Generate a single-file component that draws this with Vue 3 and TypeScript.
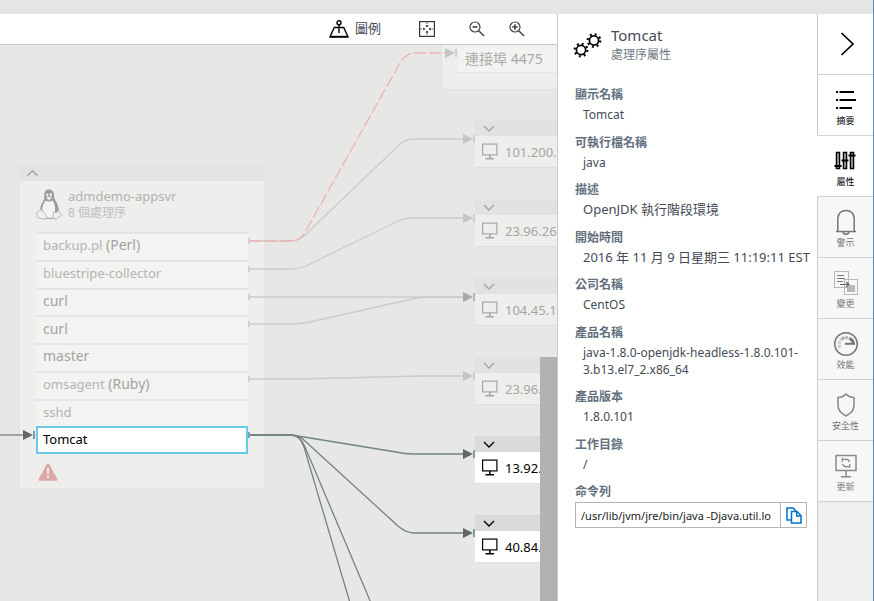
<script setup lang="ts">
import { ref } from 'vue'

interface ProcessRow {
  name: string
  runtime?: string
  tone?: 'strong'
  selected?: boolean
}

interface ServerNode {
  address: string
  x: number
  y: number
  active: boolean
}

interface Edge {
  d: string
  kind: 'faint' | 'active' | 'failed'
}

interface Marker {
  x: number
  y: number
  kind: 'faint' | 'medium' | 'active'
}

interface Field {
  label: string
  value: string
  localized?: boolean
}

const processes: ProcessRow[] = [
  { name: 'backup.pl', runtime: '(Perl)' },
  { name: 'bluestripe-collector' },
  { name: 'curl', tone: 'strong' },
  { name: 'curl', tone: 'strong' },
  { name: 'master', tone: 'strong' },
  { name: 'omsagent', runtime: '(Ruby)' },
  { name: 'sshd' },
  { name: 'Tomcat', selected: true },
]

const servers: ServerNode[] = [
  { address: '101.200.', x: 475, y: 75, active: false },
  { address: '23.96.26', x: 475, y: 154, active: false },
  { address: '104.45.1', x: 475, y: 233, active: false },
  { address: '23.96.', x: 475, y: 312, active: false },
  { address: '13.92.', x: 475, y: 391, active: true },
  { address: '40.84.', x: 475, y: 470, active: true },
]

const edges: Edge[] = [
  { d: 'M250 196H290Q298 196 305 190L398 101Q405 94 413 94H464', kind: 'faint' },
  { d: 'M250 224H290Q298 224 306 221L396 177Q404 173 413 173H464', kind: 'faint' },
  { d: 'M250 252H464', kind: 'faint' },
  { d: 'M250 279H292Q300 279 310 277L412 254Q420 252 430 252H464', kind: 'faint' },
  { d: 'M250 334L300 334L420 331H464', kind: 'faint' },
  { d: 'M250 196H291Q299 196 304 189L400 18Q406 8 415 8H446', kind: 'failed' },
  { d: 'M0 390H23', kind: 'active' },
  { d: 'M250 390H291L304 392L396 407Q404 409 414 409H464', kind: 'active' },
  { d: 'M250 390H291Q299 390 305 396L398 481Q406 488 415 488H464', kind: 'active' },
  { d: 'M250 390H291Q300 390 304 402L350 558', kind: 'active' },
  { d: 'M250 390H291Q300 390 305 402L371 558', kind: 'active' },
]

const arrows: Marker[] = [
  { x: 445, y: 8, kind: 'faint' },
  { x: 463, y: 94, kind: 'faint' },
  { x: 463, y: 173, kind: 'faint' },
  { x: 463, y: 252, kind: 'medium' },
  { x: 463, y: 331, kind: 'faint' },
  { x: 463, y: 409, kind: 'active' },
  { x: 463, y: 488, kind: 'active' },
  { x: 23, y: 390, kind: 'active' },
]

const outlets: Marker[] = [
  { x: 248, y: 196, kind: 'faint' },
  { x: 248, y: 224, kind: 'faint' },
  { x: 248, y: 252, kind: 'faint' },
  { x: 248, y: 279, kind: 'faint' },
  { x: 248, y: 334, kind: 'faint' },
  { x: 248, y: 390, kind: 'active' },
]

const fields: Field[] = [
  { label: '顯示名稱', value: 'Tomcat' },
  { label: '可執行檔名稱', value: 'java' },
  { label: '描述', value: 'OpenJDK 執行階段環境', localized: true },
  { label: '開始時間', value: '2016 年 11 月 9 日星期三 11:19:11 EST', localized: true },
  { label: '公司名稱', value: 'CentOS' },
  { label: '產品名稱', value: 'java-1.8.0-openjdk-headless-1.8.0.101-3.b13.el7_2.x86_64' },
  { label: '產品版本', value: '1.8.0.101' },
  { label: '工作目錄', value: '/' },
]

const tabs = ['摘要', '屬性', '警示', '變更', '效能', '安全性', '更新']
const current = ref('屬性')
const command = ref('/usr/lib/jvm/jre/bin/java -Djava.util.lo')
</script>

<template>
  <div class="app">
    <div class="strip"></div>
    <div class="main">
      <main class="map">
        <div class="toolbar">
          <button type="button" class="tool legend">
            <svg width="20" height="18" viewBox="0 0 20 18" fill="none" stroke="#000" stroke-width="1.4">
              <circle cx="10" cy="2.8" r="2" />
              <path d="M10 5V13M5.5 7.5H14.5M5.5 7L1 16.7H19L14.5 7" />
              <path d="M1 16.7H19" stroke-width="1.8" />
            </svg>
            <span>圖例</span>
          </button>
          <button type="button" class="tool">
            <svg width="16" height="16" viewBox="0 0 16 16" fill="none" stroke="#333">
              <rect x=".6" y=".6" width="14.8" height="14.8" stroke-width="1.2" />
              <path d="M8 1.5V6M8 10V14.5M1.5 8H6M10 8H14.5" stroke-width=".9" stroke-dasharray="1.500 1" />
              <path d="M6.4 4.2H9.6L8 6.4ZM6.4 11.8H9.6L8 9.6ZM4.2 6.4V9.6L6.4 8ZM11.8 6.4V9.6L9.6 8Z" fill="#333" stroke="none" />
            </svg>
          </button>
          <button type="button" class="tool">
            <svg width="16" height="16" viewBox="0 0 16 16" fill="none" stroke="#444" stroke-width="1.2">
              <circle cx="6" cy="6" r="5" />
              <path d="M9.7 9.7L15 15" stroke-width="1.5" />
              <path d="M3.5 6H8.5" stroke-width="1.6" />
            </svg>
          </button>
          <button type="button" class="tool">
            <svg width="16" height="16" viewBox="0 0 16 16" fill="none" stroke="#444" stroke-width="1.2">
              <circle cx="6" cy="6" r="5" />
              <path d="M9.7 9.7L15 15" stroke-width="1.5" />
              <path d="M3.3 6H8.7M6 3.3V8.7" stroke-width="1.6" />
            </svg>
          </button>
        </div>

        <div class="canvas">
          <section class="group">
            <header class="group-head">
              <svg width="11" height="6" viewBox="0 0 11 6" fill="none" stroke="#9b9b99" stroke-width="1.2"><path d="M.5 5.5L5.5 .8L10.5 5.5" /></svg>
            </header>
            <div class="group-body">
              <div class="machine">
                <svg width="26" height="31" viewBox="0 0 26 31">
                  <path d="M13 .5C16.600 .5 18 3 18 6.500C18 10 20 12 21.500 15.500C23 19 23 22 22 24L5 23C3.500 20 5 15 7 12.500C8.700 10 8.300 8.500 8.300 6C8.300 3 9.500 .5 13 .5Z" fill="#9c9c9a" />
                  <path d="M9.500 11.500C8 14 6 17 6.200 21C7.500 24 9 26 10 28.500H17C18.500 27 19 25 19 22C19.500 17 18 14 16.500 11.500C14.500 13 11.500 13 9.500 11.500Z" fill="#f3f3f1" />
                  <path d="M9.800 8.500Q13 6.500 16.200 8.500L13 11.500Z" fill="#ececea" stroke="#aaa" stroke-width=".5" />
                  <ellipse cx="11.300" cy="5.800" rx="1.100" ry="1.600" fill="#eee" />
                  <ellipse cx="14.800" cy="5.800" rx="1.200" ry="1.700" fill="#eee" />
                  <path d="M1.200 23C3 23 3.500 20.500 5.300 20.900C7.500 21.500 8.500 25 10 26.500C11.500 29 9.500 30.700 7 30C4.500 29 1.500 29.200 1 27.500C.7 26 1.800 25 1.200 23Z" fill="#f0f0ee" stroke="#a9a9a7" stroke-width=".8" />
                  <path d="M18 22.500C19 24 21 23.800 22.500 21.500C24 22 23.200 24 25 25.200C26 26.500 22.500 28 20.500 29.800C18.500 30.800 16.800 29.500 17.200 27.500C17.500 25.500 17 24 18 22.500Z" fill="#f0f0ee" stroke="#a9a9a7" stroke-width=".8" />
                  <path d="M10 29.300H17" stroke="#999" />
                </svg>
                <div>
                  <div class="machine-name">admdemo-appsvr</div>
                  <div class="machine-count">8 個處理序</div>
                </div>
              </div>
              <ul class="processes">
                <li
                  v-for="(p, i) in processes"
                  :key="i"
                  class="process"
                  :class="{ strong: p.tone === 'strong', selected: p.selected }"
                >
                  {{ p.name }}<span v-if="p.runtime" class="runtime">&nbsp;{{ p.runtime }}</span>
                </li>
              </ul>
              <svg class="warning" width="20" height="18" viewBox="0 0 20 18">
                <path d="M10 .5Q10.700 .5 11.200 1.300L19.400 16Q20 17.600 18.400 17.700H1.600Q0 17.600 .6 16L8.800 1.300Q9.300 .5 10 .5Z" fill="#dba9a9" />
                <path d="M8.900 5H11.100L10.800 11.500H9.200ZM9 13H11V15H9Z" fill="#f3f0ee" />
              </svg>
            </div>
          </section>

          <section class="ports">
            <div class="port">連接埠 4475</div>
          </section>

          <section
            v-for="s in servers"
            :key="s.y"
            class="server"
            :class="{ active: s.active }"
            :style="{ left: s.x + 'px', top: s.y + 'px' }"
          >
            <header class="server-head">
              <svg width="12" height="7" viewBox="0 0 12 7" fill="none" stroke="currentColor" stroke-width="1.4"><path d="M1 1L6 6L11 1" /></svg>
            </header>
            <div class="server-body">
              <svg width="16" height="17" viewBox="0 0 16 17" fill="none" stroke="currentColor">
                <rect x=".6" y="1.100" width="14.300" height="10.800" stroke-width="1.2" />
                <path d="M7.800 12V16M3.500 15.700H12" stroke-width="1.6" />
              </svg>
              <span>{{ s.address }}</span>
            </div>
          </section>

          <svg class="edges" width="557" height="557" viewBox="0 0 557 557">
            <path v-for="(e, i) in edges" :key="'e' + i" :d="e.d" class="edge" :class="e.kind" />
            <path
              v-for="(a, i) in arrows"
              :key="'a' + i"
              :d="`M${a.x} ${a.y - 5}L${a.x + 10} ${a.y}L${a.x} ${a.y + 5}Z`"
              class="arrow"
              :class="a.kind"
            />
            <path
              v-for="(a, i) in arrows"
              :key="'t' + i"
              :d="`M${a.x + 11} ${a.y - 4}V${a.y + 4}`"
              class="tick"
              :class="a.kind"
            />
            <path
              v-for="(o, i) in outlets"
              :key="'o' + i"
              :d="`M${o.x + 1} ${o.y - 3}V${o.y + 3}`"
              class="tick"
              :class="o.kind"
            />
          </svg>
          <div class="thumb"></div>
        </div>
      </main>

      <aside class="panel">
        <header class="panel-head">
          <svg width="30" height="28" viewBox="0 0 30 28" fill="none" stroke="#000">
            <circle cx="21" cy="8.500" r="4.600" stroke-width="1.700" />
            <circle cx="21" cy="8.500" r="6.300" stroke-width="2.200" stroke-dasharray="1.900 3.048" />
            <circle cx="8" cy="18" r="4.600" stroke-width="1.700" />
            <circle cx="8" cy="18" r="6.300" stroke-width="2.200" stroke-dasharray="1.900 3.048" />
          </svg>
          <div>
            <h1>Tomcat</h1>
            <p>處理序屬性</p>
          </div>
        </header>
        <dl class="fields">
          <div v-for="f in fields" :key="f.label" class="field">
            <dt>{{ f.label }}</dt>
            <dd :class="{ localized: f.localized }">{{ f.value }}</dd>
          </div>
        </dl>
        <div class="command">
          <label for="command">命令列</label>
          <div class="command-box">
            <input id="command" v-model="command" type="text" readonly />
            <button type="button">
              <svg width="16" height="17" viewBox="0 0 16 17" fill="#fff" stroke="#0072c6" stroke-width="1.500">
                <path d="M1 1H7L9.500 3.500V13H1Z" />
                <path d="M5.500 4.500H11L15 8.500V16H5.500Z" />
                <path d="M10.700 4.500V9H15" fill="none" />
              </svg>
            </button>
          </div>
        </div>
      </aside>

      <nav class="rail">
        <button type="button" class="rail-item close">
          <svg width="14" height="24" viewBox="0 0 14 24" fill="none" stroke="#000" stroke-width="1.700"><path d="M1.500 1L13 12L1.500 23" /></svg>
        </button>
        <button
          v-for="(t, i) in tabs"
          :key="t"
          type="button"
          class="rail-item tab"
          :class="{ current: t === current, first: i === 0 }"
          @click="current = t"
        >
          <svg v-if="i === 0" width="26" height="26" viewBox="0 0 26 26" stroke="#000" stroke-width="2">
            <path d="M3 5H5M6.500 5H21M3 13H5M6.500 13H23M3 21H5M6.500 21H19" />
          </svg>
          <svg v-else-if="i === 1" width="26" height="26" viewBox="0 0 26 26" fill="#bbb" stroke="#000" stroke-width="1.500">
            <path d="M3.500 4.500H6.500V20.500H3.500ZM10.500 4.500H13.500V20.500H10.500ZM17.500 4.500H20.500V20.500H17.500Z" />
            <path d="M1.500 18H8.500M8.500 12.500H15.500M15.500 7.500H22.500" stroke-width="2" />
          </svg>
          <svg v-else-if="i === 2" width="26" height="26" viewBox="0 0 26 26" fill="none" stroke="#777" stroke-width="1.500">
            <path d="M3 22.500H23M4.800 22V9.500Q5.500 1.500 13 1.500Q20.500 1.500 21.200 9.500V22M10 23Q10.500 25.300 13 25.300Q15.500 25.300 16 23" />
          </svg>
          <svg v-else-if="i === 3" width="26" height="26" viewBox="0 0 26 26" fill="none" stroke="#b5bac2">
            <rect x="1.500" y="1.500" width="14" height="16" />
            <rect x="11.500" y="9.500" width="13" height="15" />
            <path d="M4 5.500H11M4 8.500H12M4 11.500H10" stroke="#777" />
            <path d="M7 14.500H15M13 12L16 14.500L13 17" stroke="#666" stroke-width="1.200" />
            <path d="M14 22V18H16V15H22V22Z" fill="#b9b9b9" stroke="none" />
          </svg>
          <svg v-else-if="i === 4" width="26" height="26" viewBox="0 0 26 26" fill="none" stroke="#777">
            <circle cx="13" cy="13" r="11.300" stroke-width="1.500" />
            <path d="M7 17Q4.500 11 9 8" stroke="#ccc" stroke-width="3" stroke-dasharray="3 1" />
            <path d="M9 7.800Q13 5.500 17 7.800" stroke="#aaa" stroke-width="3" stroke-dasharray="2.500 1" />
            <path d="M17 7.500Q20 9.500 20.500 12" stroke-width="3" />
            <path d="M12 12.800H22" stroke-width="2" />
          </svg>
          <svg v-else-if="i === 5" width="26" height="26" viewBox="0 0 26 26" fill="none" stroke="#888" stroke-width="1.500">
            <path d="M13 2Q10 5.300 5 5.500V13Q5 20 13 24Q21 20 21 13V5.500Q16 5.300 13 2Z" />
          </svg>
          <svg v-else width="26" height="26" viewBox="0 0 26 26" fill="none" stroke="#8a8a8a" stroke-width="1.500">
            <path d="M3 2.500H23V17.500H3ZM13 17.500V23.500M8 23.800H18" />
            <path d="M16.500 9Q15.500 6 12.500 6.300H9.500M9.300 5V9M9.300 11Q10.500 14 13.500 13.700H16.500M16.700 15V11" stroke-width="1.300" />
          </svg>
          <span>{{ t }}</span>
        </button>
      </nav>
    </div>
  </div>
</template>

<style>
body {
  margin: 0;
}
</style>

<style scoped>
.app {
  display: flex;
  flex-direction: column;
  min-height: 100vh;
  box-sizing: border-box;
  border-right: 1px solid #5a8ab8;
  background: #fff;
  font-family: 'Noto Sans', 'Noto Sans CJK TC', sans-serif;
  font-size: 12px;
  color: #444b55;
}

button {
  margin: 0;
  padding: 0;
  border: 0;
  background: none;
  font: inherit;
  color: inherit;
}

svg {
  display: block;
  flex: none;
}

.strip {
  height: 14px;
  background: #e5e5e5;
}

.main {
  display: flex;
  flex: 1;
}

.map {
  display: flex;
  flex: 1;
  flex-direction: column;
  min-width: 0;
}

.toolbar {
  display: flex;
  justify-content: flex-end;
  align-items: center;
  height: 30px;
  padding-right: 32px;
  gap: 24px;
  border-bottom: 1px solid #c5c9d3;
}

.tool {
  display: flex;
  align-items: center;
}

.legend {
  gap: 6px;
  margin-right: 14px;
  font-size: 13px;
}

.legend span {
  padding-bottom: 3px;
  line-height: 16px;
}

.tool:nth-child(2) {
  margin-right: 10px;
}

.canvas {
  position: relative;
  flex: 1;
  overflow: hidden;
  background: #e7e7e5;
}

.edges {
  position: absolute;
  top: 0;
  left: 0;
  pointer-events: none;
}

.edge {
  fill: none;
  stroke-width: 1.3;
}

.edge.faint {
  stroke: #cbcccb;
}

.edge.active {
  stroke: #748385;
}

.edge.failed {
  stroke: #efb3b1;
  stroke-dasharray: 12 3;
}

.arrow.faint {
  fill: #c5c5c4;
}

.arrow.medium {
  fill: #a5a8a8;
}

.arrow.active {
  fill: #666;
}

.tick {
  stroke-width: 2;
  stroke: #c3d3da;
}

.tick.medium {
  stroke: #a9bac2;
}

.tick.active {
  stroke: #7b9fae;
}

.group {
  position: absolute;
  top: 120px;
  left: 20px;
  width: 244px;
  background: #eeeeec;
  box-shadow: 0 0 0 1px #e4e4e2;
}

.group-head {
  display: flex;
  align-items: center;
  height: 16px;
  padding-left: 7px;
  background: #e3e3e1;
}

.group-body {
  padding: 6px 16px 7px;
}

.machine {
  display: flex;
  gap: 6px;
  height: 45px;
}

.machine svg {
  margin-top: 2px;
}

.machine-name {
  font-size: 13px;
  line-height: 18px;
  color: #b2b2b0;
}

.machine-count {
  line-height: 16px;
  color: #bdc0c3;
}

.processes {
  display: grid;
  grid-auto-rows: 1fr;
  height: 222px;
  margin: 0;
  padding: 0;
  list-style: none;
}

.process {
  display: flex;
  align-items: center;
  padding: 0 0 3px 7px;
  border-top: 2px solid #e5e5e3;
  background: #f3f3f1;
  font-size: 13px;
  line-height: 20px;
  color: #b4b4b2;
}

.process.strong,
.runtime {
  font-size: 14px;
  color: #a3a3a1;
}

.process.selected {
  border: 2px solid #6acbe9;
  padding: 0 0 2px 5px;
  background: #fff;
  color: #000;
}

.warning {
  margin: 9px 0 0 2px;
}

.ports {
  position: absolute;
  top: -40px;
  left: 441px;
  width: 180px;
  padding: 40px 0 16px 16px;
  border: 1px solid #e1e1df;
  box-sizing: border-box;
  background: #eeeeec;
}

.port {
  padding-left: 7px;
  border-bottom: 1px solid #e5e5e3;
  background: #f2f2f0;
  font-size: 14px;
  line-height: 26px;
  color: #a9a9a7;
}

.server {
  position: absolute;
  width: 160px;
  border-bottom: 1px solid #dededc;
  background: #eeeeec;
  color: #a5a5a3;
}

.server-head {
  display: flex;
  align-items: center;
  height: 16px;
  padding-left: 8px;
  background: #e2e2e0;
}

.server-body {
  display: flex;
  align-items: center;
  gap: 7px;
  height: 31px;
  padding-left: 7px;
  font-size: 13px;
}

.server.active {
  background: #fff;
  color: #000;
}

.active .server-head {
  background: #d9dadc;
}

.thumb {
  position: absolute;
  top: 312px;
  right: 0;
  bottom: 0;
  width: 17px;
  background: #b2b2b2;
}

.panel {
  width: 260px;
  box-sizing: border-box;
  padding: 12px 10px 0 17px;
  border-left: 1px solid #c5c9d3;
}

.panel-head {
  display: flex;
  gap: 8px;
  height: 59px;
}

.panel-head svg {
  margin-top: 6px;
  margin-left: -2px;
}

h1 {
  margin: 0;
  font-size: 15px;
  font-weight: 400;
  line-height: 19px;
}

p {
  margin: 0;
  line-height: 19px;
  color: #6f7a86;
}

.fields {
  margin: 0;
}

.field {
  padding-bottom: 9px;
}

.field:nth-child(odd) {
  padding-bottom: 10px;
}

dt,
label {
  display: block;
  line-height: 20px;
  font-weight: 700;
  color: #64707d;
}

dd {
  margin: 1px -8px 0 8px;
  line-height: 17px;
}

.localized {
  font-size: 13px;
}

.command-box {
  display: flex;
  height: 26px;
  box-sizing: border-box;
  border: 1px solid #b5b5b5;
}

input {
  flex: 1;
  min-width: 0;
  margin: 0 4px 0 5px;
  padding: 0;
  border: 0;
  outline: 0;
  font: inherit;
  font-size: 11px;
  color: #222;
}

.command-box button {
  display: flex;
  justify-content: center;
  align-items: center;
  width: 26px;
  border-left: 1px solid #b5b5b5;
}

.rail {
  display: flex;
  flex-direction: column;
  width: 56px;
  background: #efefef;
}

.rail-item {
  display: flex;
  flex-direction: column;
  align-items: center;
  justify-content: center;
  gap: 1px;
  height: 61px;
  box-sizing: border-box;
  border-bottom: 1px solid #cfd2d8;
  border-left: 1px solid #c5c9d3;
  background: #f7f7f7;
  font-size: 9px;
  line-height: 14px;
  color: #777;
}

.rail-item.close {
  padding-left: 3px;
}

.rail-item.tab {
  padding-top: 4px;
}

.rail-item.close,
.rail-item.first,
.rail-item.current {
  background: #fff;
  color: #000;
}

.rail-item.current {
  border-left-color: #fff;
}

.rail::after {
  content: '';
  flex: 1;
  border-left: 1px solid #c5c9d3;
}
</style>
